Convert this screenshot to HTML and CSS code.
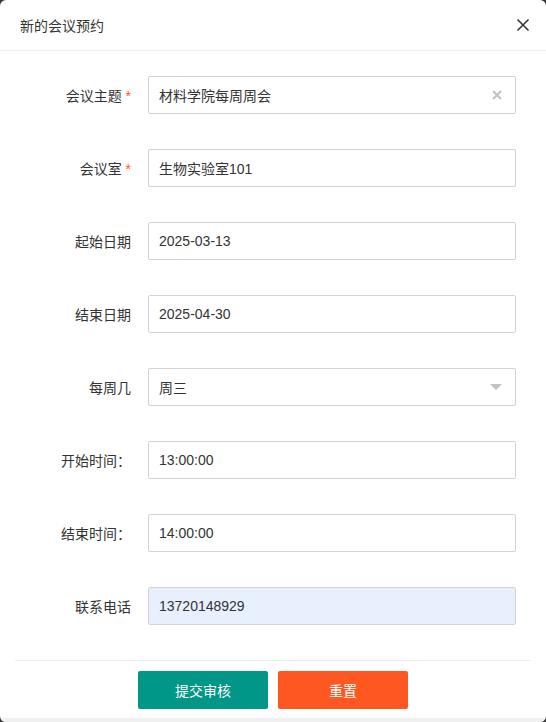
FILE: index.html
```html
<!DOCTYPE html>
<html>
<head lang="zh-CN">
    <meta charset="UTF-8">
    <title>新的会议预约</title>
    <link rel="stylesheet" href="styles.css">
</head>
<body>
<div class="layer">
    <div class="layer-title">
        <span>新的会议预约</span>
        <svg class="layer-close" width="14" height="14" viewBox="0 0 14 14">
            <path d="M1.5 1.5 L12.5 12.5 M12.5 1.5 L1.5 12.5" stroke="#333" stroke-width="1.5" fill="none"/>
        </svg>
    </div>
    <form class="form">
        <div class="form-item">
            <label class="form-label">会议主题 <em>*</em></label>
            <div class="input-block">
                <input class="input" type="text" value="材料学院每周周会">
                <svg class="input-clear" width="10" height="10" viewBox="0 0 10 10">
                    <path d="M1 1 L9 9 M9 1 L1 9" stroke="#c2c2c2" stroke-width="2" fill="none"/>
                </svg>
            </div>
        </div>
        <div class="form-item">
            <label class="form-label">会议室 <em>*</em></label>
            <div class="input-block"><input class="input" type="text" value="生物实验室101"></div>
        </div>
        <div class="form-item">
            <label class="form-label">起始日期</label>
            <div class="input-block"><input class="input" type="text" value="2025-03-13"></div>
        </div>
        <div class="form-item">
            <label class="form-label">结束日期</label>
            <div class="input-block"><input class="input" type="text" value="2025-04-30"></div>
        </div>
        <div class="form-item">
            <label class="form-label">每周几</label>
            <div class="input-block">
                <input class="input" type="text" value="周三" readonly>
                <i class="select-edge"></i>
            </div>
        </div>
        <div class="form-item">
            <label class="form-label">开始时间：</label>
            <div class="input-block"><input class="input" type="text" value="13:00:00"></div>
        </div>
        <div class="form-item">
            <label class="form-label">结束时间：</label>
            <div class="input-block"><input class="input" type="text" value="14:00:00"></div>
        </div>
        <div class="form-item">
            <label class="form-label">联系电话</label>
            <div class="input-block"><input class="input input-filled" type="text" value="13720148929"></div>
        </div>
    </form>
    <div class="layer-btns">
        <button class="btn btn-submit" type="button">提交审核</button>
        <button class="btn btn-reset" type="button">重置</button>
    </div>
    <div class="layer-bottom"></div>
</div>
</body>
</html>
```

FILE: styles.css
```css
*{padding: 0;margin: 0;box-sizing: border-box;}
html,body{height: 100%;}
body{background: #333;font: 14px "Liberation Sans", "Noto Sans CJK SC", sans-serif;color: #333;}
.layer{width: 546px;height: 722px;background: #fff;border-radius: 6px;overflow: hidden;display: flex;flex-direction: column;}
.layer-title{height: 51px;padding: 0 16px 0 20px;border-bottom: 1px solid #f0f0f0;display: flex;align-items: center;justify-content: space-between;font-size: 14px;color: #333;}
.layer-close{display: block;}
.form{padding: 25px 30px 0 0;display: flex;flex-direction: column;gap: 35px;}
.form-item{display: flex;align-items: center;height: 38px;}
.form-label{width: 148px;padding-right: 17px;text-align: right;font-size: 14px;color: #333;}
.form-label em{font-style: normal;color: #ff5722;}
.input-block{position: relative;flex: 1;height: 38px;}
.input{width: 100%;height: 38px;border: 1px solid #d2d2d2;border-radius: 2px;padding: 0 10px;font: 14px "Liberation Sans", "Noto Sans CJK SC", sans-serif;color: #333;background: #fff;outline: none;}
.input-filled{background: #e8f0fe;}
.input-clear{position: absolute;right: 14px;top: 14px;}
.select-edge{position: absolute;right: 14px;top: 16px;width: 0;height: 0;border-style: solid;border-width: 6px 6px 0;border-color: #c2c2c2 transparent transparent;}
.layer-btns{margin: 35px 15px 0;border-top: 1px solid #eee;padding-top: 10px;display: flex;justify-content: center;gap: 10px;}
.btn{width: 130px;height: 38px;border: 0;border-radius: 2px;color: #fff;font: 14px "Liberation Sans", "Noto Sans CJK SC", sans-serif;}
.btn-submit{background: #009688;}
.btn-reset{background: #ff5722;}
.layer-bottom{margin-top: auto;height: 4px;background: #f0f0f0;}
```
